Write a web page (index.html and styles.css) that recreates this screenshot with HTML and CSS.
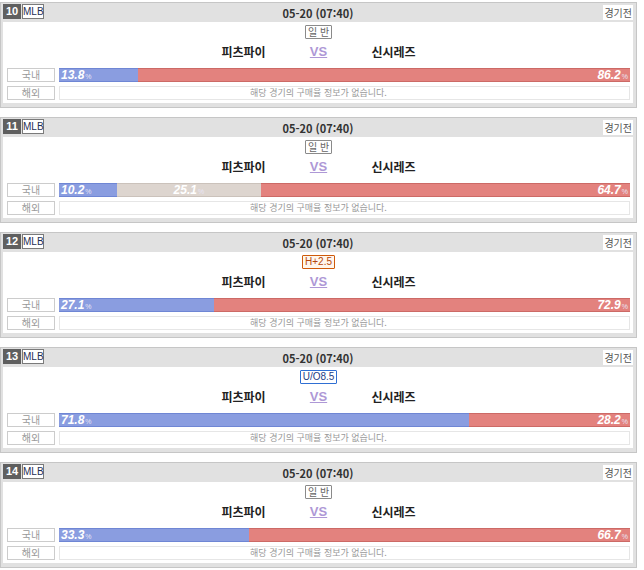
FILE: index.html
```html
<!DOCTYPE html>
<html lang="ko">

<head>
    <meta charset="UTF-8">
    <meta name="viewport" content="width=device-width, initial-scale=1.0">
    <title>MLB 구매율</title>
    <link rel="stylesheet" href="styles.css">
</head>

<body>
    <div class="list">
        <!-- 10 -->
        <div class="game">
            <div class="game-head">
                <div class="league"><span class="num">10</span><span class="lg">MLB</span></div>
                <div class="time">05-20 (07:40)</div>
                <div class="state"><span>경기전</span></div>
            </div>
            <div class="game-body">
                <div class="type"><span class="badge">일 반</span></div>
                <div class="teams">
                    <span class="team">피츠파이</span>
                    <span class="vs">VS</span>
                    <span class="team">신시레즈</span>
                </div>
                <div class="row">
                    <span class="label">국내</span>
                    <div class="bar">
                        <div class="seg win" style="width: 13.8%">13.8<small>%</small></div>
                        <div class="seg lose" style="width: 86.2%">86.2<small>%</small></div>
                    </div>
                </div>
                <div class="row">
                    <span class="label">해외</span>
                    <div class="bar empty">해당 경기의 구매율 정보가 없습니다.</div>
                </div>
            </div>
        </div>

        <!-- 11 -->
        <div class="game">
            <div class="game-head">
                <div class="league"><span class="num">11</span><span class="lg">MLB</span></div>
                <div class="time">05-20 (07:40)</div>
                <div class="state"><span>경기전</span></div>
            </div>
            <div class="game-body">
                <div class="type"><span class="badge">일 반</span></div>
                <div class="teams">
                    <span class="team">피츠파이</span>
                    <span class="vs">VS</span>
                    <span class="team">신시레즈</span>
                </div>
                <div class="row">
                    <span class="label">국내</span>
                    <div class="bar">
                        <div class="seg win" style="width: 10.2%">10.2<small>%</small></div>
                        <div class="seg draw" style="width: 25.1%">25.1<small>%</small></div>
                        <div class="seg lose" style="width: 64.7%">64.7<small>%</small></div>
                    </div>
                </div>
                <div class="row">
                    <span class="label">해외</span>
                    <div class="bar empty">해당 경기의 구매율 정보가 없습니다.</div>
                </div>
            </div>
        </div>

        <!-- 12 -->
        <div class="game">
            <div class="game-head">
                <div class="league"><span class="num">12</span><span class="lg">MLB</span></div>
                <div class="time">05-20 (07:40)</div>
                <div class="state"><span>경기전</span></div>
            </div>
            <div class="game-body">
                <div class="type"><span class="badge handi">H+2.5</span></div>
                <div class="teams">
                    <span class="team">피츠파이</span>
                    <span class="vs">VS</span>
                    <span class="team">신시레즈</span>
                </div>
                <div class="row">
                    <span class="label">국내</span>
                    <div class="bar">
                        <div class="seg win" style="width: 27.1%">27.1<small>%</small></div>
                        <div class="seg lose" style="width: 72.9%">72.9<small>%</small></div>
                    </div>
                </div>
                <div class="row">
                    <span class="label">해외</span>
                    <div class="bar empty">해당 경기의 구매율 정보가 없습니다.</div>
                </div>
            </div>
        </div>

        <!-- 13 -->
        <div class="game">
            <div class="game-head">
                <div class="league"><span class="num">13</span><span class="lg">MLB</span></div>
                <div class="time">05-20 (07:40)</div>
                <div class="state"><span>경기전</span></div>
            </div>
            <div class="game-body">
                <div class="type"><span class="badge uo">U/O8.5</span></div>
                <div class="teams">
                    <span class="team">피츠파이</span>
                    <span class="vs">VS</span>
                    <span class="team">신시레즈</span>
                </div>
                <div class="row">
                    <span class="label">국내</span>
                    <div class="bar">
                        <div class="seg win" style="width: 71.8%">71.8<small>%</small></div>
                        <div class="seg lose" style="width: 28.2%">28.2<small>%</small></div>
                    </div>
                </div>
                <div class="row">
                    <span class="label">해외</span>
                    <div class="bar empty">해당 경기의 구매율 정보가 없습니다.</div>
                </div>
            </div>
        </div>

        <!-- 14 -->
        <div class="game">
            <div class="game-head">
                <div class="league"><span class="num">14</span><span class="lg">MLB</span></div>
                <div class="time">05-20 (07:40)</div>
                <div class="state"><span>경기전</span></div>
            </div>
            <div class="game-body">
                <div class="type"><span class="badge">일 반</span></div>
                <div class="teams">
                    <span class="team">피츠파이</span>
                    <span class="vs">VS</span>
                    <span class="team">신시레즈</span>
                </div>
                <div class="row">
                    <span class="label">국내</span>
                    <div class="bar">
                        <div class="seg win" style="width: 33.3%">33.3<small>%</small></div>
                        <div class="seg lose" style="width: 66.7%">66.7<small>%</small></div>
                    </div>
                </div>
                <div class="row">
                    <span class="label">해외</span>
                    <div class="bar empty">해당 경기의 구매율 정보가 없습니다.</div>
                </div>
            </div>
        </div>
    </div>
</body>

</html>
```

FILE: styles.css
```css
* {
    box-sizing: border-box;
    margin: 0;
    padding: 0;
}

body {
    background-color: #ffffff;
    font-family: "Noto Sans CJK KR", "Noto Sans", sans-serif;
    font-size: 11px;
    color: #333333;
}

.list {
    width: 637px;
    padding-top: 2px;
}

.game {
    border: 1px solid #c6c6c6;
    background-color: #e1e1e1;
    padding: 0 3px 4px 2px;
    margin-bottom: 9px;
}

/* 상단 헤더 */
.game-head {
    height: 19px;
    display: grid;
    grid-template-columns: 1fr auto 1fr;
    align-items: center;
}

.league {
    display: flex;
    height: 15px;
    align-self: start;
    margin-top: 1px;
}

.num {
    width: 18px;
    background-color: #5f5f5f;
    color: #ffffff;
    font-family: "Liberation Sans", sans-serif;
    font-weight: bold;
    font-size: 11px;
    line-height: 15px;
    text-align: center;
}

.lg {
    margin-left: 1px;
    width: 22px;
    border: 1px solid #7a7a7a;
    background-color: #ffffff;
    color: #1f2f55;
    font-family: "Liberation Sans", sans-serif;
    font-size: 10px;
    line-height: 13px;
    text-align: center;
}

.time {
    font-weight: bold;
    font-size: 11px;
    color: #333333;
    padding-top: 1px;
}

.state {
    display: flex;
    justify-content: flex-end;
}

.state span {
    background-color: #ffffff;
    color: #555555;
    font-size: 10px;
    line-height: 15px;
    padding: 0 1px;
}

/* 본문 */
.game-body {
    background-color: #ffffff;
    padding: 3px 3px 3px 4px;
}

.type {
    display: flex;
    justify-content: center;
}

.badge {
    height: 14px;
    border: 1px solid #8a8a8a;
    border-radius: 1px;
    padding: 0 2px;
    color: #666666;
    font-size: 10px;
    line-height: 12px;
}

.badge.handi {
    border-color: #cf5a0a;
    background-color: #fff6ec;
    color: #b6480a;
    font-family: "Liberation Sans", sans-serif;
}

.badge.uo {
    border-color: #2f6fd3;
    color: #1e3d86;
    font-family: "Liberation Sans", sans-serif;
}

.teams {
    display: flex;
    justify-content: center;
    height: 26px;
    line-height: 25px;
    margin-bottom: 3px;
}

.team,
.vs {
    width: 75px;
    text-align: center;
    font-weight: bold;
    font-size: 12px;
    color: #222222;
}

.vs {
    font-family: "Liberation Sans", sans-serif;
    font-size: 13px;
    color: #ae98d6;
    text-decoration: underline;
}

.row {
    display: flex;
    gap: 4px;
    height: 14px;
    margin-bottom: 4px;
}

.row:last-child {
    margin-bottom: 0;
}

.label {
    width: 48px;
    border: 1px solid #cccccc;
    color: #999999;
    font-size: 10px;
    line-height: 12px;
    text-align: center;
}

.bar {
    flex: 1;
    display: flex;
}

/* 문구는 본문 가운데 기준으로 */
.bar.empty {
    border: 1px solid #e6e6e6;
    justify-content: center;
    padding-right: 52px;
    color: #999999;
    font-size: 9px;
    line-height: 12px;
}

.seg {
    color: #ffffff;
    font-family: "Liberation Sans", sans-serif;
    font-weight: bold;
    font-style: italic;
    font-size: 12px;
    line-height: 12px;
    padding: 0 2px;
    white-space: nowrap;
    overflow: hidden;
    border-top: 1px solid;
    border-bottom: 1px solid;
}

.seg small {
    font-size: 7px;
    font-style: normal;
    font-weight: normal;
    color: #e8e4f4;
    margin-left: 1px;
}

.seg.win {
    background-color: #8a9de0;
    border-color: #6f86d4;
    text-align: left;
}

.seg.draw {
    background-color: #ddd5cf;
    border-color: #cbc2bb;
    text-align: center;
}

.seg.lose {
    background-color: #e3827e;
    border-color: #cc6a66;
    text-align: right;
}
```
